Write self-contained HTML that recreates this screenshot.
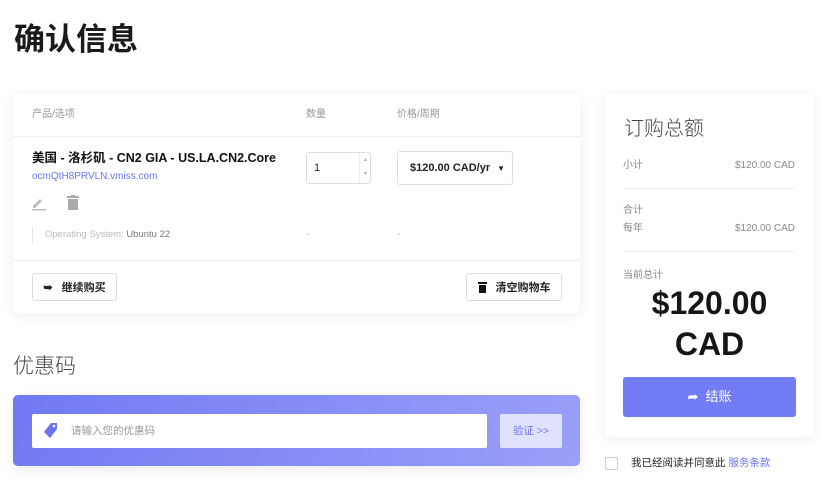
<!DOCTYPE html>
<html><head><meta charset="utf-8"><style>
*{box-sizing:border-box;margin:0;padding:0}
body{width:832px;height:502px;background:#fff;font-family:"Liberation Sans","Noto Sans CJK SC",sans-serif;color:#222;position:relative;overflow:hidden}
.abs{position:absolute}
h1{position:absolute;left:14px;top:14px;font-size:31px;font-weight:700;color:#1a1a1a;font-family:"Noto Sans CJK SC",sans-serif}
.card{position:absolute;background:#fff;border-radius:5px;box-shadow:0 2px 14px rgba(0,0,0,.07)}
.g{color:#999;font-size:10px;line-height:14px}
.btn{position:absolute;border:1px solid #ddd;border-radius:3px;background:#fff;font-size:11px;font-weight:700;display:flex;align-items:center;justify-content:center;gap:9px;color:#222}
</style></head><body>
<h1>确认信息</h1>
<div class="card" style="left:13px;top:94px;width:567px;height:219px">
 <div class="abs g" style="left:19px;top:14px">产品/选项</div>
 <div class="abs g" style="left:293px;top:14px">数量</div>
 <div class="abs g" style="left:384px;top:14px">价格/周期</div>
 <div class="abs" style="left:0;top:42px;width:567px;border-top:1px solid #eee"></div>
 <div class="abs" style="left:19px;top:56px;font-size:12.5px;line-height:16px;font-weight:700;color:#111">美国 - 洛杉矶 - CN2 GIA - US.LA.CN2.Core</div>
 <div class="abs" style="left:19px;top:76px;font-size:10px;line-height:14px;color:#6b73f0">ocmQtH8PRVLN.vmiss.com</div>
 <svg class="abs" style="left:18px;top:101px" width="16" height="16" viewBox="0 0 16 16"><path d="M2 11l7-7 2 2-7 7H2z" fill="#bbb"/><rect x="1" y="14" width="14" height="1.5" fill="#bbb"/></svg>
 <svg class="abs" style="left:54px;top:101px" width="12" height="16" viewBox="0 0 12 16"><rect x="0" y="1" width="12" height="2" fill="#aaa"/><rect x="4" y="0" width="4" height="2" fill="#aaa"/><rect x="1" y="4" width="10" height="11" fill="#aaa"/></svg>
 <div class="abs" style="left:19px;top:133px;height:16px;border-left:1px solid #e5e5e5"></div>
 <div class="abs" style="left:32px;top:134px;font-size:9.5px;line-height:14px;color:#bbb">Operating System: <span style="color:#777">Ubuntu 22</span></div>
 <div class="abs g" style="left:293px;top:134px;color:#bbb">-</div>
 <div class="abs g" style="left:384px;top:134px;color:#bbb">-</div>
 <div class="abs" style="left:293px;top:58px;width:65px;height:32px;border:1px solid #ddd;border-radius:3px;font-size:11px;line-height:14px;padding:8px 0 0 7px">1<div class="abs" style="left:52px;top:0;height:30px;border-left:1px solid #eee;font-size:6px;color:#aaa;width:12px;text-align:center;line-height:14px">▴<br>▾</div></div>
 <div class="abs" style="left:384px;top:57px;width:116px;height:34px;border:1px solid #ddd;border-radius:3px;font-size:11px;line-height:14px;font-weight:700;padding:9px 0 0 12px">$120.00 CAD/yr <span style="font-size:8px;margin-left:4px">▼</span></div>
 <div class="abs" style="left:0;top:166px;width:567px;border-top:1px solid #eee"></div>
 <div class="btn" style="left:19px;top:179px;width:85px;height:28px"><span>➥</span>继续购买</div>
 <div class="btn" style="left:453px;top:179px;width:96px;height:28px"><svg width="9" height="11" viewBox="0 0 9 11"><rect width="9" height="2" fill="#111"/><rect x="1" y="3" width="7" height="8" fill="#111"/></svg>清空购物车</div>
</div>
<div class="abs" style="left:13px;top:350px;font-size:21px;font-weight:300;color:#444;font-family:'Noto Sans CJK SC',sans-serif">优惠码</div>
<div class="abs" style="left:13px;top:395px;width:567px;height:71px;border-radius:5px;background:linear-gradient(110deg,#7179f3,#9aa0f8);box-shadow:0 4px 14px rgba(0,0,0,.08)">
 <div class="abs" style="left:19px;top:19px;width:455px;height:34px;background:#fff;border-radius:2px"></div>
 <svg class="abs" style="left:31px;top:28px" width="14" height="16" viewBox="0 0 14 16"><path d="M7 0h6v6L6 15 0 9z" fill="#6b73f0"/><circle cx="10" cy="3" r="1.3" fill="#fff"/></svg>
 <div class="abs" style="left:58px;top:29px;font-size:10.5px;line-height:14px;color:#999">请输入您的优惠码</div>
 <div class="abs" style="left:487px;top:19px;width:62px;height:34px;background:#e0e2fd;border-radius:2px;font-size:10.5px;color:#6b73f0;text-align:center;line-height:34px">验证 &gt;&gt;</div>
</div>
<div class="card" style="left:605px;top:94px;width:209px;height:343px">
 <div class="abs" style="left:19px;top:18px;font-size:20px;font-weight:300;color:#444;font-family:'Noto Sans CJK SC',sans-serif">订购总额</div>
 <div class="abs g" style="left:18px;top:65px;color:#888">小计</div>
 <div class="abs g" style="right:19px;top:65px;color:#888">$120.00 CAD</div>
 <div class="abs" style="left:18px;top:94px;width:172px;border-top:1px solid #eee"></div>
 <div class="abs g" style="left:18px;top:110px;color:#888">合计</div>
 <div class="abs g" style="left:18px;top:128px;color:#888">每年</div>
 <div class="abs g" style="right:19px;top:128px;color:#888">$120.00 CAD</div>
 <div class="abs" style="left:18px;top:157px;width:172px;border-top:1px solid #eee"></div>
 <div class="abs g" style="left:18px;top:175px;color:#888">当前总计</div>
 <div class="abs" style="left:0;width:209px;top:189px;text-align:center;font-size:32px;font-weight:700;line-height:41px;color:#161616">$120.00<br>CAD</div>
 <div class="abs" style="left:18px;top:283px;width:173px;height:40px;background:#727cf5;border-radius:3px;color:#fff;font-size:13px;text-align:center;line-height:40px">➦&nbsp;&nbsp;结账</div>
</div>
<div class="abs" style="left:605px;top:457px;width:13px;height:13px;border:1px solid #ccc;border-radius:2px"></div>
<div class="abs" style="left:631px;top:456px;font-size:10.5px;line-height:14px;color:#222">我已经阅读并同意此 <span style="color:#6b73f0">服务条款</span></div>
</body></html>
